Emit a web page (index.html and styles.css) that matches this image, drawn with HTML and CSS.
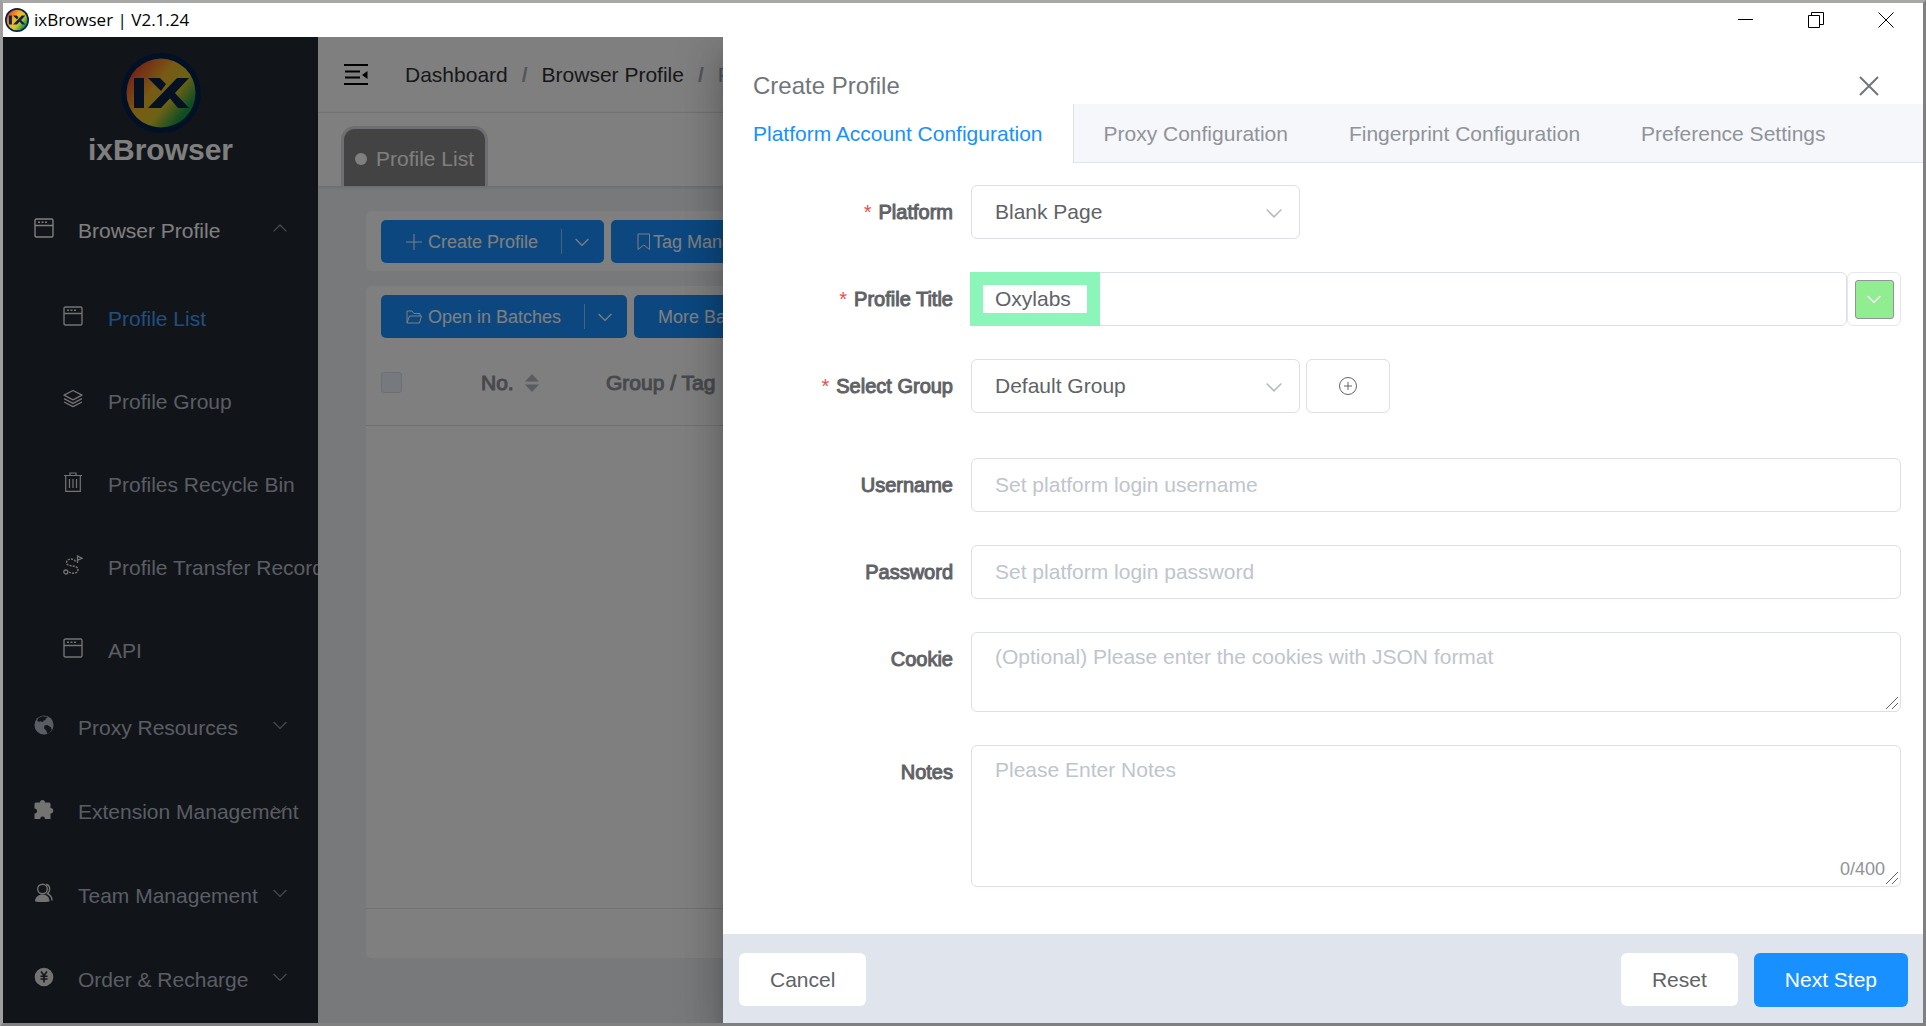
FILE: index.html
```html
<!DOCTYPE html>
<html lang="en">
<head>
<meta charset="utf-8">
<title>ixBrowser | V2.1.24</title>
<link rel="stylesheet" href="styles.css">
</head>
<body>
<svg class="defs" aria-hidden="true">
  <defs>
    <linearGradient id="logo-fill" x1="0" y1="0.1" x2="1" y2="0.9">
      <stop offset="0.05" stop-color="#e8392b"/>
      <stop offset="0.4" stop-color="#f0b429"/>
      <stop offset="0.62" stop-color="#d9c52c"/>
      <stop offset="0.85" stop-color="#1c9a48"/>
      <stop offset="1" stop-color="#0f8a45"/>
    </linearGradient>
    <symbol id="logo" viewBox="0 0 80 80">
      <circle cx="40" cy="40" r="40" fill="#03234b"/>
      <circle cx="40" cy="40" r="34.500" fill="url(#logo-fill)"/>
      <path fill="#0b2344" d="M13 25h10v30H13zM27 25h12l6 6-5 7zM56 25h12L40 55H27zM47 43l5-5 16 17H57z"/>
    </symbol>
    <symbol id="window" viewBox="0 0 20 20">
      <path fill="none" stroke="currentColor" stroke-width="1.4" d="M2.5 1h15q1.500 0 1.500 1.500v15q0 1.500-1.500 1.500h-15q-1.500 0-1.500-1.500v-15Q1 1 2.500 1zM1 7.500h18"/>
      <path stroke="currentColor" stroke-width="1.400" d="M4 4.300h2M7.500 4.300h2M11 4.300h2"/>
    </symbol>
    <symbol id="layers" viewBox="0 0 20 20">
      <path fill="none" stroke="currentColor" stroke-width="1.300" stroke-linejoin="round" d="M10 1.500l9 4.700-9 4.700-9-4.700zM1 9.700l9 4.700 9-4.700M1 13l9 4.700 9-4.700"/>
    </symbol>
    <symbol id="trash" viewBox="0 0 20 20">
      <path fill="none" stroke="currentColor" stroke-width="1.200" d="M1 3.500h18M7 3.500V1h6v2.500M2.700 3.500v15.800h14.600V3.500M6.500 7v9M10 7v9M13.500 7v9"/>
    </symbol>
    <symbol id="route" viewBox="0 0 20 20">
      <path fill="none" stroke="currentColor" stroke-width="1.400" stroke-dasharray="2.200 1" d="M12.500 6.500C11 3 3.500 3 3.500 8c0 4 11.500 1.500 11.500 6.500 0 4.500-6.500 4.500-9 2.500"/>
      <circle cx="2.800" cy="17" r="2" fill="none" stroke="currentColor" stroke-width="1.300"/>
      <path fill="none" stroke="currentColor" stroke-width="1.300" d="M14.500 8V1l4.500 2.300-4.500 2"/>
    </symbol>
    <symbol id="globe" viewBox="0 0 22 22">
      <circle cx="11" cy="11" r="10.500" fill="currentColor"/>
      <path fill="#222830" d="M5 3.200l4-1.700 5 .5 1 1-2.500 1 .5 1.500-2.500.5-.5 2L7.500 7 5 7.500 3.500 6zM11.500 11.500l3-.5 4 2.500 1 3-2.500 3-2.500 1-1-3.500-2.500-2.500z"/>
    </symbol>
    <symbol id="puzzle" viewBox="0 0 20 20">
      <path fill="currentColor" d="M2 3.500h4a2.500 2.500 0 1 1 5 0h4q1.500 0 1.500 1.500v4a2.500 2.500 0 0 1 0 5.500V20H11a2.400 2.400 0 0 0-4.800 0H.5v-5.500a2.500 2.500 0 0 0 0-5V5Q.5 3.500 2 3.500z"/>
    </symbol>
    <symbol id="team" viewBox="0 0 20 20">
      <circle cx="8.500" cy="6" r="4.800" fill="none" stroke="currentColor" stroke-width="1.400"/>
      <path fill="currentColor" d="M1 18.500c0-4 3-7 7.500-7s7 3 7 7q-7 1-14.500 0z"/>
      <path fill="none" stroke="currentColor" stroke-width="1.400" d="M12 1.500c4 0 5 6 1.500 9 3 1.500 4.500 4 4.500 7"/>
    </symbol>
    <symbol id="yen" viewBox="0 0 20 20">
      <circle cx="10" cy="10" r="9.300" fill="currentColor"/>
      <path fill="none" stroke="#222830" stroke-width="1.600" d="M7 4.500l3 4 3-4M10 8.500v7M6.500 9.200h7M6.500 12h7"/>
    </symbol>
    <symbol id="down" viewBox="0 0 14 14">
      <path fill="none" stroke="currentColor" stroke-width="1.300" d="M.6 4L7 10.400 13.400 4"/>
    </symbol>
    <symbol id="up" viewBox="0 0 14 14">
      <path fill="none" stroke="currentColor" stroke-width="1.300" d="M.6 10.400L7 4l6.400 6.400"/>
    </symbol>
    <symbol id="grip" viewBox="0 0 14 14">
      <path fill="none" stroke="#606266" d="M1 13L13 1M7 13l6-6"/>
    </symbol>
  </defs>
</svg>

<div class="window">
  <header class="titlebar">
    <svg class="app-icon"><use href="#logo"/></svg>
    <span class="app-title">ixBrowser | V2.1.24</span>
    <div class="win-controls">
      <button type="button" aria-label="Minimize"><svg viewBox="0 0 16 16"><path d="M0 7.500h15"/></svg></button>
      <button type="button" aria-label="Restore"><svg viewBox="0 0 16 16"><path d="M.5 3.500h11v12H.5zM3.500 3.500v-3h12v12h-4"/></svg></button>
      <button type="button" aria-label="Close"><svg viewBox="0 0 16 16"><path d="M.5.5l15 15M15.500.5l-15 15"/></svg></button>
    </div>
  </header>

  <div class="body">
    <aside class="sidebar">
      <div class="brand">
        <svg class="brand-logo"><use href="#logo"/></svg>
        <span class="brand-name">ixBrowser</span>
      </div>
      <nav class="menu">
        <a class="item open" href="#"><svg><use href="#window"/></svg><span>Browser Profile</span><svg class="caret"><use href="#up"/></svg></a>
        <div class="submenu">
          <a class="sub current" href="#"><svg><use href="#window"/></svg><span>Profile List</span></a>
          <a class="sub" href="#"><svg><use href="#layers"/></svg><span>Profile Group</span></a>
          <a class="sub" href="#"><svg><use href="#trash"/></svg><span>Profiles Recycle Bin</span></a>
          <a class="sub" href="#"><svg><use href="#route"/></svg><span>Profile Transfer Records</span></a>
          <a class="sub" href="#"><svg><use href="#window"/></svg><span>API</span></a>
        </div>
        <a class="item" href="#"><svg><use href="#globe"/></svg><span>Proxy Resources</span><svg class="caret"><use href="#down"/></svg></a>
        <a class="item" href="#"><svg class="light"><use href="#puzzle"/></svg><span>Extension Management</span><svg class="caret"><use href="#down"/></svg></a>
        <a class="item" href="#"><svg class="light"><use href="#team"/></svg><span>Team Management</span><svg class="caret"><use href="#down"/></svg></a>
        <a class="item" href="#"><svg class="light"><use href="#yen"/></svg><span>Order &amp; Recharge</span><svg class="caret"><use href="#down"/></svg></a>
      </nav>
    </aside>

    <main class="main">
      <div class="topbar">
        <button class="fold" type="button" aria-label="Collapse menu">
          <svg viewBox="0 0 24 22"><path fill="none" stroke="#000" stroke-width="2" d="M0 1h24M1 7.500h15M1 13.500h15M0 20h24"/><path d="M23.500 7v8L18 11z"/></svg>
        </button>
        <nav class="crumbs"><a href="#">Dashboard</a><b>/</b><a href="#">Browser Profile</a><b>/</b><span>Profile List</span></nav>
      </div>
      <div class="pagetabs"><a class="pagetab" href="#"><i></i>Profile List</a></div>
      <div class="content">
        <section class="card toolbar">
          <div class="split">
            <button type="button"><svg viewBox="0 0 16 16"><path d="M8 0v16M0 8h16"/></svg>Create Profile</button>
            <button class="more" type="button" aria-label="More create options"><svg><use href="#down"/></svg></button>
          </div>
          <button class="solid tag" type="button"><svg viewBox="0 0 14 18"><path d="M1 1h11.500v15.500L6.800 12 1 16.500z"/></svg>Tag Management</button>
        </section>
        <section class="card list">
          <div class="toolbar">
            <div class="split">
              <button type="button"><svg viewBox="0 0 16 16"><path d="M1 14V2h5l2 2.500h6V7M1 14L3.500 7h12L13.500 14z"/></svg>Open in Batches</button>
              <button class="more" type="button" aria-label="More batch options"><svg><use href="#down"/></svg></button>
            </div>
            <button class="solid" type="button">More Batch Actions</button>
          </div>
          <table class="profiles">
            <thead><tr>
              <th class="col-check"><input type="checkbox" disabled aria-label="Select all"></th>
              <th class="col-no"><span>No.<svg viewBox="0 0 16 18"><path d="M1 7.500L8 0l7 7.500zM1 10.500L8 18l7-7.500z"/></svg></span></th>
              <th>Group / Tag</th>
            </tr></thead>
          </table>
          <div class="pager"></div>
        </section>
      </div>
    </main>

    <div class="mask"></div>

    <section class="drawer" role="dialog" aria-labelledby="drawer-title">
      <header class="drawer-head">
        <h2 id="drawer-title">Create Profile</h2>
        <button type="button" aria-label="Close dialog"><svg viewBox="0 0 20 20"><path d="M1 1l18 18M19 1L1 19"/></svg></button>
      </header>
      <nav class="tabs">
        <button class="active" type="button">Platform Account Configuration</button>
        <button type="button">Proxy Configuration</button>
        <button type="button">Fingerprint Configuration</button>
        <button type="button">Preference Settings</button>
      </nav>
      <form class="form">
        <div class="row">
          <label class="required" for="platform">Platform</label>
          <div class="field"><div class="select"><select id="platform"><option>Blank Page</option></select><svg><use href="#down"/></svg></div></div>
        </div>
        <div class="row">
          <label class="required" for="title">Profile Title</label>
          <div class="field title-field">
            <input id="title" type="text" value="Oxylabs">
            <div class="highlight"></div>
            <button class="color" type="button" aria-label="Title colour"><span><svg><use href="#down"/></svg></span></button>
          </div>
        </div>
        <div class="row group-row">
          <label class="required" for="group">Select Group</label>
          <div class="field"><div class="select"><select id="group"><option>Default Group</option></select><svg><use href="#down"/></svg></div>
            <button class="add" type="button" aria-label="Add group"><svg viewBox="0 0 20 20"><circle cx="10" cy="10" r="8.500"/><path d="M10 6v8M6 10h8"/></svg></button></div>
        </div>
        <div class="row">
          <label for="username">Username</label>
          <div class="field"><input id="username" type="text" placeholder="Set platform login username"></div>
        </div>
        <div class="row">
          <label for="password">Password</label>
          <div class="field"><input id="password" type="password" placeholder="Set platform login password"></div>
        </div>
        <div class="row">
          <label for="cookie">Cookie</label>
          <div class="field"><textarea id="cookie" class="short" placeholder="(Optional) Please enter the cookies with JSON format"></textarea><svg class="grip"><use href="#grip"/></svg></div>
        </div>
        <div class="row">
          <label for="notes">Notes</label>
          <div class="field"><textarea id="notes" class="tall" placeholder="Please Enter Notes"></textarea><span class="count">0/400</span><svg class="grip"><use href="#grip"/></svg></div>
        </div>
      </form>
      <footer class="drawer-foot">
        <button type="button">Cancel</button>
        <button class="reset" type="button">Reset</button>
        <button class="primary" type="button">Next Step</button>
      </footer>
    </section>
  </div>
</div>
</body>
</html>
```
FILE: styles.css
```css
* { box-sizing: border-box; }

body {
  margin: 0;
  font-family: "Liberation Sans", Arial, sans-serif;
  font-size: 21px;
  line-height: 24px;
  color: #606266;
}

button, input, select, textarea { font: inherit; color: inherit; }
button { display: flex; align-items: center; justify-content: center; padding: 0; border: 0; background: none; white-space: nowrap; }
a { color: inherit; text-decoration: none; }
svg { flex: none; }
.defs { position: absolute; width: 0; height: 0; }

/* Window frame */
.window {
  display: flex;
  flex-direction: column;
  height: 100vh;
  border: 3px solid;
  border-color: #a7a7a5 #808080 #808080 #9e9e9c;
  background: #fff;
}
.titlebar { display: flex; align-items: center; height: 34px; padding: 0 2px; color: #000; }
.app-icon { width: 24px; height: 24px; }
.app-title { margin-left: 5px; font-family: "Open Sans", sans-serif; font-size: 17px; }
.win-controls { display: flex; margin-left: auto; }
.win-controls button { width: 70px; height: 34px; }
.win-controls svg { width: 16px; height: 16px; fill: none; stroke: #000; }
.body { position: relative; display: flex; flex: 1; min-height: 0; overflow: hidden; }

/* Sidebar */
.sidebar { flex: none; width: 315px; overflow: hidden; background: #222830; color: #b4bbc8; }
.brand { display: flex; flex-direction: column; align-items: center; height: 152px; padding-top: 16px; }
.brand-logo { width: 80px; height: 80px; }
.brand-name { font-size: 30px; line-height: 34px; font-weight: 700; color: #fff; }
.item, .sub { display: flex; align-items: center; white-space: nowrap; }
.item { position: relative; height: 84px; padding-left: 31px; gap: 24px; }
.sub { height: 83px; padding-left: 60px; gap: 25px; }
.submenu { padding-top: 4px; margin-bottom: -6px; }
.item svg, .sub svg { width: 20px; height: 20px; margin-bottom: 6px; }
.sub svg, .light { color: #e6e6e6; }
.item.open { color: #fff; }
.sub.current { color: #409eff; }
.item .caret { position: absolute; right: 31px; width: 14px; height: 14px; color: #909399; }

/* Main area behind the drawer */
.main { display: flex; flex: 1; flex-direction: column; min-width: 0; background: #f0f3f6; }
.topbar { display: flex; align-items: center; gap: 37px; height: 76px; padding-left: 26px; background: #fff; border-bottom: 1px solid #eceef1; }
.fold svg { width: 24px; height: 22px; }
.crumbs { display: flex; gap: 14px; white-space: nowrap; color: #97a8be; }
.crumbs a { color: #303133; }
.crumbs b { font-weight: 700; color: #a8abb2; }
.pagetabs { display: flex; align-items: flex-end; height: 73px; padding-left: 23px; background: #fff; box-shadow: 0 1px 4px rgba(0, 0, 0, 0.15); }
.pagetab { display: flex; align-items: center; gap: 9px; height: 60px; padding: 3px 11px 0; border: 3px solid #d8dce5; border-bottom: 0; border-radius: 14px 14px 0 0; background: #868686; color: #fff; }
.pagetab i { width: 12px; height: 12px; border-radius: 50%; background: #fff; }
.content { display: flex; flex: 1; flex-direction: column; gap: 15px; padding: 25px 48px 65px; }
.card { border-radius: 6px; background: #fff; }
.toolbar { display: flex; gap: 7px; padding: 9px 15px 8px; font-size: 18px; color: #fff; }
.split { display: flex; align-items: center; height: 43px; border-radius: 5px; background: #1890ff; }
.split button { gap: 6px; height: 43px; padding: 0 23px 0 25px; }
.split .more { height: 25px; padding: 0 15px 0 13px; border-left: 1px solid #8ac6ff; }
.toolbar svg { width: 16px; height: 16px; fill: none; stroke: #fff; stroke-width: 1px; }
.split .more svg { width: 14px; height: 14px; }
.solid { height: 43px; padding: 0 24px; border-radius: 5px; background: #1890ff; }
.solid.tag svg { width: 14px; height: 18px; margin: 0 2px; }
.list { display: flex; flex: 1; flex-direction: column; }
.profiles { width: 100%; height: 80px; border-collapse: collapse; border-bottom: 1px solid #dfe2e8; color: #909399; text-align: left; }
.profiles th { padding: 0 0 6px; font-weight: 400; -webkit-text-stroke: 1px; }
.profiles .col-check { width: 115px; padding-left: 15px; }
.profiles .col-no { width: 125px; }
.profiles span { display: flex; align-items: center; gap: 10px; }
.profiles svg { width: 16px; height: 18px; fill: #b4b8c0; }
.profiles input { display: block; appearance: none; width: 21px; height: 21px; margin: 0; border: 1px solid #dcdfe6; border-radius: 3px; background: #edf2fc; }
.pager { height: 50px; margin-top: auto; border-top: 1px solid #dfe2e8; }
.mask { position: absolute; inset: 0; background: rgba(0, 0, 0, 0.5); }

/* Drawer */
.drawer {
  position: absolute;
  top: 0;
  right: 0;
  bottom: 0;
  display: flex;
  flex-direction: column;
  width: 62.5%;
  background: #fff;
  box-shadow: 0 12px 15px -7px rgba(0, 0, 0, 0.2), 0 24px 36px 3px rgba(0, 0, 0, 0.14), 0 9px 45px 8px rgba(0, 0, 0, 0.12);
}
.drawer-head { display: flex; align-items: center; justify-content: space-between; height: 67px; padding: 30px 44px 0 30px; color: #72767b; }
.drawer-head h2 { margin: 0; font-size: 24px; font-weight: 400; }
.drawer-head svg { width: 20px; height: 20px; fill: none; stroke: #72767b; stroke-width: 2px; }
.tabs { display: flex; height: 59px; border-bottom: 1px solid #dfe4ed; background: #f5f7fa; color: #909399; }
.tabs button { height: 59px; padding: 0 31px 0 30px; }
.tabs .active { padding: 0 30px; border-right: 1px solid #dcdfe6; background: #fff; color: #1890ff; }
.form { display: flex; flex: 1; flex-direction: column; gap: 33px; min-height: 0; padding: 22px 22px 0 0; }
.row { display: flex; gap: 18px; }
.row label { flex: none; width: 230px; font-size: 20px; line-height: 54px; text-align: right; -webkit-text-stroke: 1px; }
.required::before { content: "*"; margin-right: 7px; color: #f14c4c; -webkit-text-stroke: 0; }
.field { position: relative; display: flex; flex: 1; gap: 6px; min-width: 0; }
.group-row { padding-bottom: 12px; }
.select { position: relative; width: 329px; }
.select svg { position: absolute; top: 20px; right: 18px; width: 16px; height: 16px; color: #b4b8c0; pointer-events: none; }
select, .form input, textarea { display: block; width: 100%; height: 54px; margin: 0; padding: 0 23px; border: 1px solid #dcdfe6; border-radius: 6px; background: #fff; appearance: none; outline: 0; }
textarea { padding-top: 12px; resize: none; }
::placeholder { color: #c0c4cc; opacity: 1; }
.form .short { height: 80px; }
.form .tall { height: 142px; }
.grip { position: absolute; right: 2px; bottom: 2px; width: 14px; height: 14px; }
.count { position: absolute; right: 16px; bottom: 6px; font-size: 18px; color: #909399; }
.title-field { gap: 0; }
.highlight { position: absolute; top: 0; left: -1px; width: 130px; height: 54px; border: 13px solid #8cf5b9; pointer-events: none; }
.color { flex: none; width: 54px; height: 54px; border: 1px solid #e4e7ed; border-radius: 6px; }
.color span { display: flex; align-items: center; justify-content: center; width: 39px; height: 39px; border: 1px solid #909399; border-radius: 3px; background: #90ee90; color: #fff; }
.color svg { width: 14px; height: 14px; stroke-width: 2px; }
.add { width: 84px; height: 54px; border: 1px solid #dcdfe6; border-radius: 6px; }
.add svg { width: 20px; height: 20px; fill: none; stroke: #606266; stroke-width: 1px; }
.drawer-foot { display: flex; align-items: center; height: 89px; padding: 2px 15px 0 16px; background: #dfe4ed; }
.drawer-foot button { height: 53px; padding: 0 31px; border-radius: 6px; background: #fff; }
.drawer-foot .reset { margin: 0 16px 0 auto; }
.drawer-foot .primary { height: 54px; background: #1890ff; color: #fff; }
```
